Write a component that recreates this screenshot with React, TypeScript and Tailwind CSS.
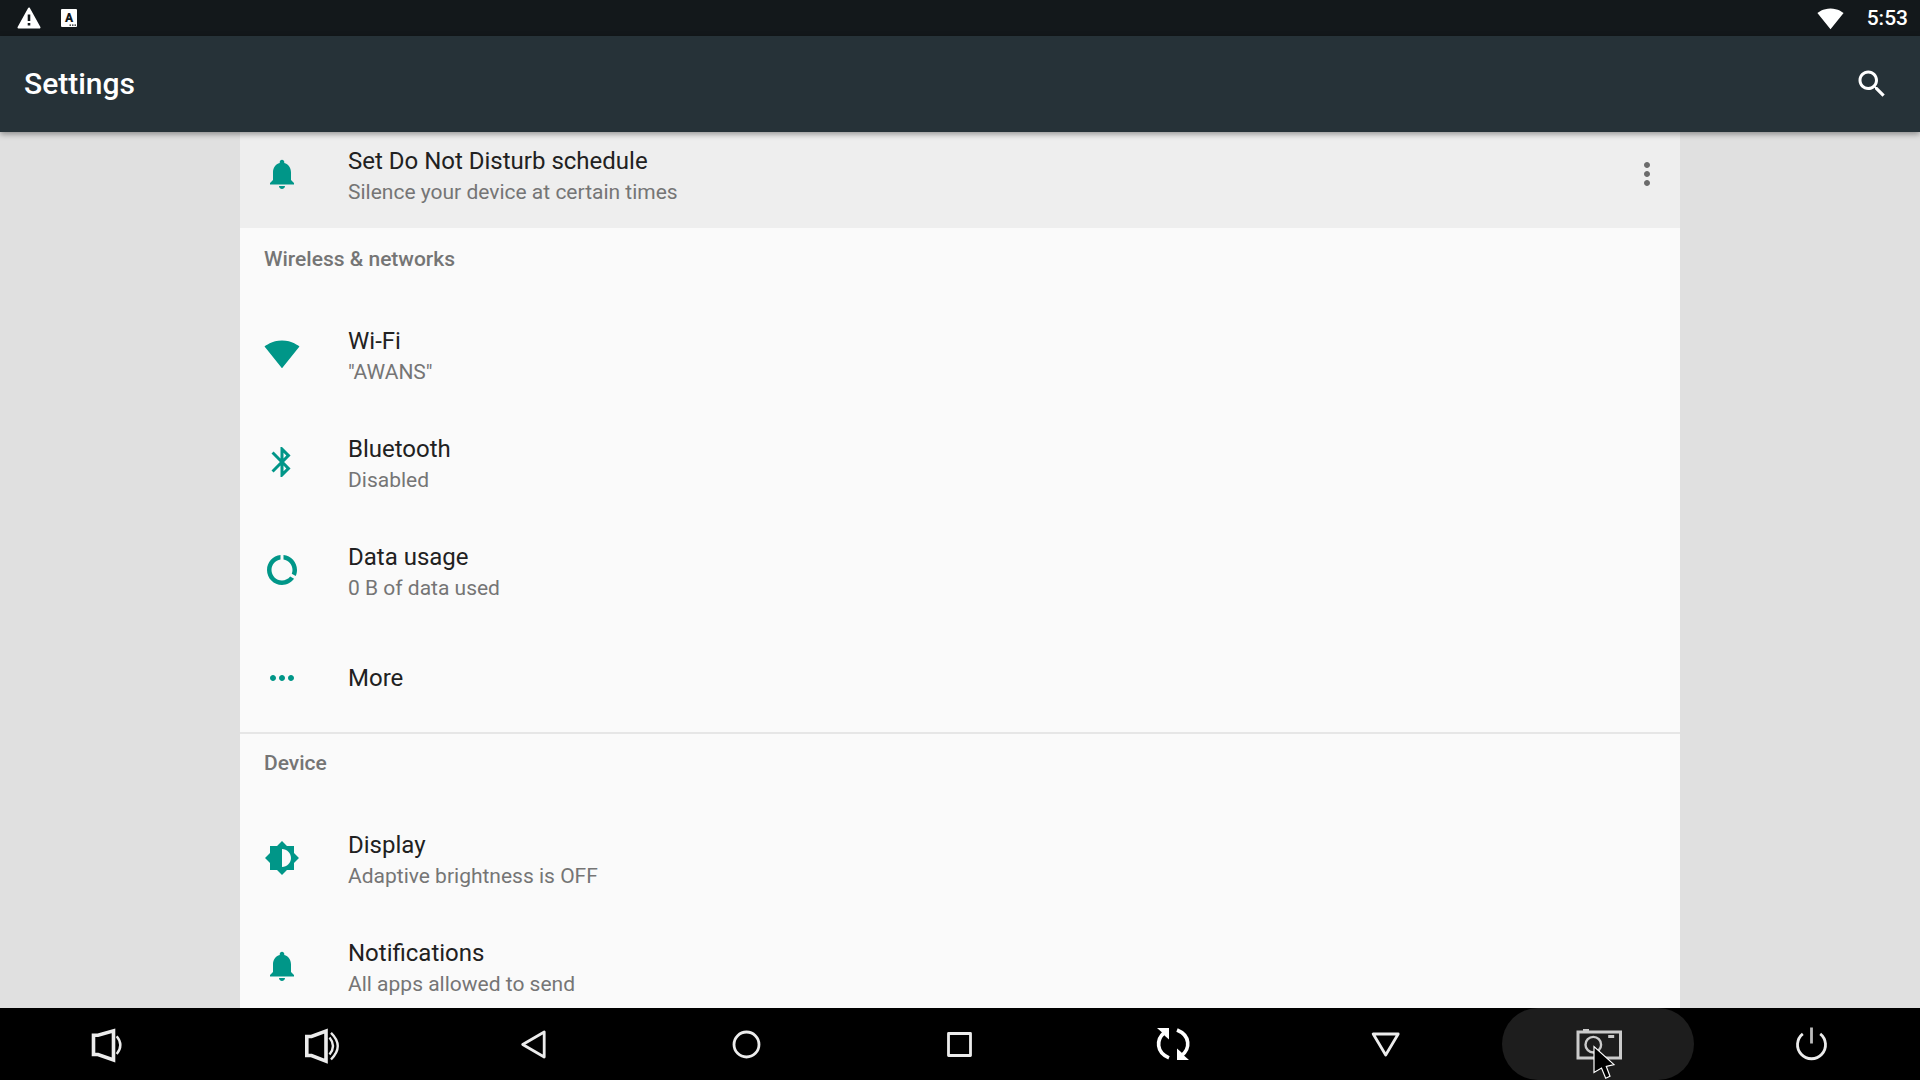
import type { ReactNode } from 'react';

const icons = {
  bell: 'M12 22c1.1 0 2-.9 2-2h-4c0 1.1.89 2 2 2zm6-6v-5c0-3.07-1.64-5.64-4.5-6.32V4c0-.83-.67-1.5-1.5-1.5s-1.5.67-1.5 1.5v.68C7.63 5.36 6 7.92 6 11v5l-2 2v1h16v-1l-2-2z',
  wifi: 'M12.01 21.49L23.64 7c-.45-.34-4.93-4-11.64-4C5.28 3 .81 6.66.36 7l11.63 14.49.01.01.01-.01z',
  bluetooth:
    'M17.71 7.71L12 2h-1v7.59L6.41 5 5 6.41 10.59 12 5 17.59 6.41 19 11 14.41V22h1l5.71-5.71-4.3-4.29 4.3-4.29zM13 5.83l1.88 1.88L13 9.59V5.83zm1.88 10.46L13 18.17v-3.76l1.88 1.88z',
  dataUsage:
    'M13 2.05v3.03c3.39.49 6 3.39 6 6.92 0 .9-.18 1.75-.48 2.54l2.6 1.53c.56-1.24.88-2.62.88-4.07 0-5.18-3.95-9.45-9-9.95zM12 19c-3.87 0-7-3.13-7-7 0-3.53 2.61-6.43 6-6.92V2.05c-5.06.5-9 4.76-9 9.95 0 5.52 4.47 10 9.99 10 3.31 0 6.24-1.61 8.06-4.09l-2.6-1.53C16.17 17.98 14.21 19 12 19z',
  moreHoriz:
    'M6 10c-1.1 0-2 .9-2 2s.9 2 2 2 2-.9 2-2-.9-2-2-2zm12 0c-1.1 0-2 .9-2 2s.9 2 2 2 2-.9 2-2-.9-2-2-2zm-6 0c-1.1 0-2 .9-2 2s.9 2 2 2 2-.9 2-2-.9-2-2-2z',
  moreVert:
    'M12 8c1.1 0 2-.9 2-2s-.9-2-2-2-2 .9-2 2 .9 2 2 2zm0 2c-1.1 0-2 .9-2 2s.9 2 2 2 2-.9 2-2-.9-2-2-2zm0 6c-1.1 0-2 .9-2 2s.9 2 2 2 2-.9 2-2-.9-2-2-2z',
  brightness:
    'M20 15.31L23.31 12 20 8.69V4h-4.69L12 .69 8.69 4H4v4.69L.69 12 4 15.31V20h4.69L12 23.31 15.31 20H20v-4.69zM12 18V6c3.31 0 6 2.69 6 6s-2.69 6-6 6z',
  search:
    'M15.5 14h-.79l-.28-.27C15.41 12.59 16 11.11 16 9.5 16 5.91 13.09 3 9.5 3S3 5.91 3 9.5 5.91 16 9.5 16c1.61 0 3.09-.59 4.23-1.57l.27.28v.79l5 4.99L20.49 19l-4.99-5zm-6 0C7.01 14 5 11.99 5 9.5S7.01 5 9.5 5 14 7.01 14 9.5 11.99 14 9.5 14z',
};

type IconName = keyof typeof icons;

type Item = { icon: IconName; title: string; summary?: string };

const sections: { title: string; items: Item[] }[] = [
  {
    title: 'Wireless & networks',
    items: [
      { icon: 'wifi', title: 'Wi-Fi', summary: '"AWANS"' },
      { icon: 'bluetooth', title: 'Bluetooth', summary: 'Disabled' },
      { icon: 'dataUsage', title: 'Data usage', summary: '0 B of data used' },
      { icon: 'moreHoriz', title: 'More' },
    ],
  },
  {
    title: 'Device',
    items: [
      { icon: 'brightness', title: 'Display', summary: 'Adaptive brightness is OFF' },
      { icon: 'bell', title: 'Notifications', summary: 'All apps allowed to send' },
    ],
  },
];

function Icon({ name, className = 'size-9' }: { name: IconName; className?: string }) {
  return (
    <svg viewBox="0 0 24 24" fill="currentColor" aria-hidden="true" className={`shrink-0 ${className}`}>
      <path d={icons[name]} />
    </svg>
  );
}

function SettingRow({ icon, title, summary }: Item) {
  return (
    <button type="button" className="flex h-[108px] w-full items-center gap-12 px-6 text-left">
      <Icon name={icon} className="size-9 text-[#009688]" />
      <span className="flex flex-col">
        <span className="text-2xl leading-9 text-[#212121]">{title}</span>
        {summary && <span className="text-[21px] leading-[26px] text-[#757575]">{summary}</span>}
      </span>
    </button>
  );
}

function StatusBar() {
  return (
    <div className="flex h-9 shrink-0 items-center justify-between bg-[#13181b] pl-[17px] pr-3">
      <div className="flex items-center gap-5">
        <svg viewBox="0 0 24 24" className="size-6" aria-label="Warning">
          <path d="M12 2.5 22.5 21.5H1.5z" fill="#fff" stroke="#fff" strokeWidth="2" strokeLinejoin="round" />
          <path d="M10.7 8.5h2.6V15h-2.6zM10.7 17h2.6v2.5h-2.6z" fill="#13181b" />
        </svg>
        <svg viewBox="0 0 16 18" className="h-[18px] w-4" aria-label="Keyboard">
          <rect width="16" height="18" rx="1" fill="#fff" />
          <text x="8" y="13" textAnchor="middle" fontFamily="Roboto, sans-serif" fontSize="12" fontWeight="900" fill="#13181b">
            A
          </text>
          <path d="M8.5 15.5H10v1.3H8.5zM11 15.5h1.5v1.3H11zM13.5 15.5H15v1.3h-1.5z" fill="#13181b" />
        </svg>
      </div>
      <div className="flex items-center gap-[23px] text-white">
        <Icon name="wifi" className="size-[27px]" />
        <span className="text-[21px] leading-7 font-medium">5:53</span>
      </div>
    </div>
  );
}

function NavButton({ label, active, children }: { label: string; active?: boolean; children: ReactNode }) {
  return (
    <button type="button" aria-label={label} className="relative flex h-full items-center justify-center">
      <span className={`flex h-full w-48 items-center justify-center rounded-full ${active ? 'bg-[#1d1d1d]' : ''}`}>
        <svg
          viewBox="0 0 48 48"
          fill="none"
          stroke={active ? '#cbcbcb' : '#ececec'}
          strokeWidth="2.8"
          strokeLinejoin="round"
          className="size-12 overflow-visible"
        >
          {children}
        </svg>
      </span>
      {active && (
        <svg viewBox="0 0 24 36" className="absolute top-1/2 left-1/2 -ml-1.5 h-9 w-6" aria-hidden="true">
          <path d="M2 2.5V28.5L9.5 24 13.7 34.2 18 32.2 14.3 22.4 22 20.6z" fill="#000" stroke="#fff" strokeWidth="1.2" />
        </svg>
      )}
    </button>
  );
}

function NavBar() {
  return (
    <nav className="grid h-18 shrink-0 grid-cols-9 bg-black pr-[3px]">
      <NavButton label="Volume down">
        <path d="M10.5 15.2H15L30.5 10.8V40L15 34.5H10.5z" strokeLinejoin="miter" strokeWidth="3.6" />
        <path d="M33.7 16.2Q41 25 33.7 34" strokeWidth="2.4" />
      </NavButton>
      <NavButton label="Volume up">
        <path d="M10.8 16.5H15.5L30 11V41.2L15.5 35.5H10.8z" strokeLinejoin="miter" strokeWidth="3.6" />
        <path d="M33.5 17.5Q40.5 26 33.5 34.5M35 12.8Q48.5 26 35 39.5" strokeWidth="2.4" />
      </NavButton>
      <NavButton label="Back">
        <path d="M13.7 24.5 35.2 12V37z" />
      </NavButton>
      <NavButton label="Home">
        <circle cx="24.5" cy="24.5" r="12.5" />
      </NavButton>
      <NavButton label="Recent apps">
        <rect x="13.5" y="13.5" width="22" height="22" />
      </NavButton>
      <NavButton label="Rotate">
        <g fill="#fff" stroke="none">
          <path d="M9 8H21V19.5L17 16 13 11.5z" />
          <path d="M29 28.5V40H41L37 36.5 33 32z" />
        </g>
        <path d="M21 37.8C8 32.5 8 19.5 16.5 12.5M29 10C42.5 15.5 42.5 28.5 33.5 35.5" stroke="#fff" strokeWidth="3.6" />
      </NavButton>
      <NavButton label="Hide navigation">
        <path d="M12.2 14H37.2L24.7 35z" />
      </NavButton>
      <NavButton label="Screenshot" active>
        <rect x="4" y="12" width="42.5" height="26" strokeLinejoin="miter" strokeWidth="3" />
        <path d="M9 10H15" strokeWidth="2" />
        <circle cx="19.3" cy="24.7" r="7.8" strokeWidth="2.4" />
        <path d="M34.2 16.5H40.2" strokeWidth="3" />
      </NavButton>
      <NavButton label="Power">
        <path d="M15.8 13.8A14 14 0 1 0 33.2 13.8" />
        <path d="M24.5 7.5V23.5" stroke="#bdbdbd" />
      </NavButton>
    </nav>
  );
}

export default function App() {
  return (
    <div className="flex h-screen flex-col overflow-hidden bg-[#e0e0e0] font-[Roboto,sans-serif]">
      <StatusBar />
      <header className="z-10 flex h-24 shrink-0 items-center justify-between bg-[#263238] pr-[30px] pl-6 text-white shadow-[0_2px_6px_rgba(0,0,0,0.4)]">
        <h1 className="text-3xl font-medium">Settings</h1>
        <button type="button" aria-label="Search">
          <Icon name="search" />
        </button>
      </header>

      <main className="min-h-0 flex-1 overflow-hidden px-[12.5%]">
        {/* list is scrolled slightly under the header */}
        <div className="-mt-3 bg-[#fafafa]">
          <div className="flex items-center bg-[#eeeeee] pr-[15px]">
            <SettingRow icon="bell" title="Set Do Not Disturb schedule" summary="Silence your device at certain times" />
            <button type="button" aria-label="More options" className="text-[#6b6b6b]">
              <Icon name="moreVert" />
            </button>
          </div>

          {sections.map((section) => (
            <section key={section.title} className="border-t-2 border-[#e6e6e6] first-of-type:border-[#fafafa]">
              <h2 className="h-[70px] px-6 pt-4 text-[21px] leading-[26px] font-medium text-[#757575]">{section.title}</h2>
              {section.items.map((item) => (
                <SettingRow key={item.title} {...item} />
              ))}
            </section>
          ))}
        </div>
      </main>

      <NavBar />
    </div>
  );
}
